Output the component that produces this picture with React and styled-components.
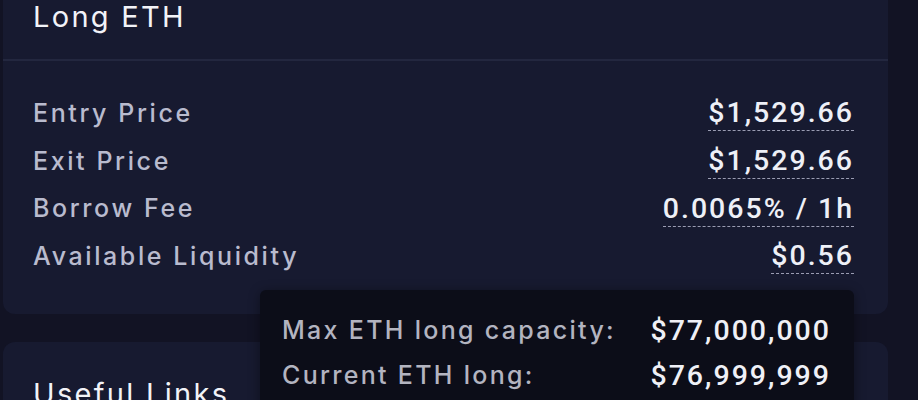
import React from "react";
import styled, { createGlobalStyle } from "styled-components";

const GlobalStyle = createGlobalStyle`
  html, body {
    margin: 0;
    padding: 0;
    background: #121324;
    overflow: hidden;
  }
  body {
    font-family: Inter, "Open Sans", sans-serif;
    -webkit-font-smoothing: antialiased;
  }
`;

const Page = styled.div`
  width: 885px;
  margin: -35px 0 0 3px;
  display: flex;
  flex-direction: column;
  gap: 28px;
`;

const Card = styled.section`
  background: #171a30;
  border-radius: 12px;
  position: relative;
`;

const CardHeader = styled.div`
  padding: 32px 30px 22px;
  border-bottom: 2px solid #23273f;
`;

const Title = styled.h2`
  margin: 0;
  font-size: 29px;
  font-weight: 400;
  letter-spacing: 2.3px;
  line-height: 40px;
  color: #f2f3f8;
`;

const CardBody = styled.div`
  padding: 28px 34px 34px 30px;
  display: flex;
  flex-direction: column;
`;

const Row = styled.div`
  height: 47.7px;
  display: flex;
  align-items: center;
  justify-content: space-between;
`;

const Label = styled.span`
  font-size: 25px;
  font-weight: 500;
  color: #b9bbce;
  letter-spacing: 2.6px;
  white-space: nowrap;
`;

const ValueWrap = styled.span`
  position: relative;
  white-space: nowrap;
`;

const Value = styled.span`
  font-family: Roboto, Inter, sans-serif;
  font-size: 28.5px;
  font-weight: 500;
  letter-spacing: 2px;
  color: #eef0f7;
  border-bottom: 1px dashed #9a9cb2;
  padding-bottom: 1px;
`;

const Tooltip = styled.div`
  position: absolute;
  top: 51px;
  right: 0;
  width: 549px;
  padding: 18px 23px 20px 22px;
  background: #0c0d18;
  border-radius: 6px;
  box-shadow: 0 2px 12px rgba(0, 0, 0, 0.4);
  display: grid;
  grid-template-columns: auto auto;
  justify-content: space-between;
  z-index: 2;
`;

const TipLabel = styled.span`
  font-size: 25px;
  font-weight: 500;
  line-height: 45px;
  letter-spacing: 2.3px;
  color: #b3b4c0;
`;

const TipValue = styled.span`
  font-family: Roboto, Inter, sans-serif;
  font-size: 28.5px;
  font-weight: 500;
  line-height: 45px;
  letter-spacing: 2px;
  color: #eff0f6;
`;

const rows = [
  ["Entry Price", "$1,529.66"],
  ["Exit Price", "$1,529.66"],
  ["Borrow Fee", "0.0065% / 1h"],
  ["Available Liquidity", "$0.56"],
];

export default function App() {
  return (
    <>
      <GlobalStyle />
      <Page>
        <Card>
          <CardHeader>
            <Title>Long ETH</Title>
          </CardHeader>
          <CardBody>
            {rows.map(([label, value], i) => (
              <Row key={label}>
                <Label>{label}</Label>
                <ValueWrap>
                  <Value>{value}</Value>
                  {i === rows.length - 1 && (
                    <Tooltip>
                      <TipLabel>Max ETH long capacity:</TipLabel>
                      <TipValue>$77,000,000</TipValue>
                      <TipLabel>Current ETH long:</TipLabel>
                      <TipValue>$76,999,999</TipValue>
                    </Tooltip>
                  )}
                </ValueWrap>
              </Row>
            ))}
          </CardBody>
        </Card>
        <Card>
          <CardHeader>
            <Title>Useful Links</Title>
          </CardHeader>
        </Card>
      </Page>
    </>
  );
}
